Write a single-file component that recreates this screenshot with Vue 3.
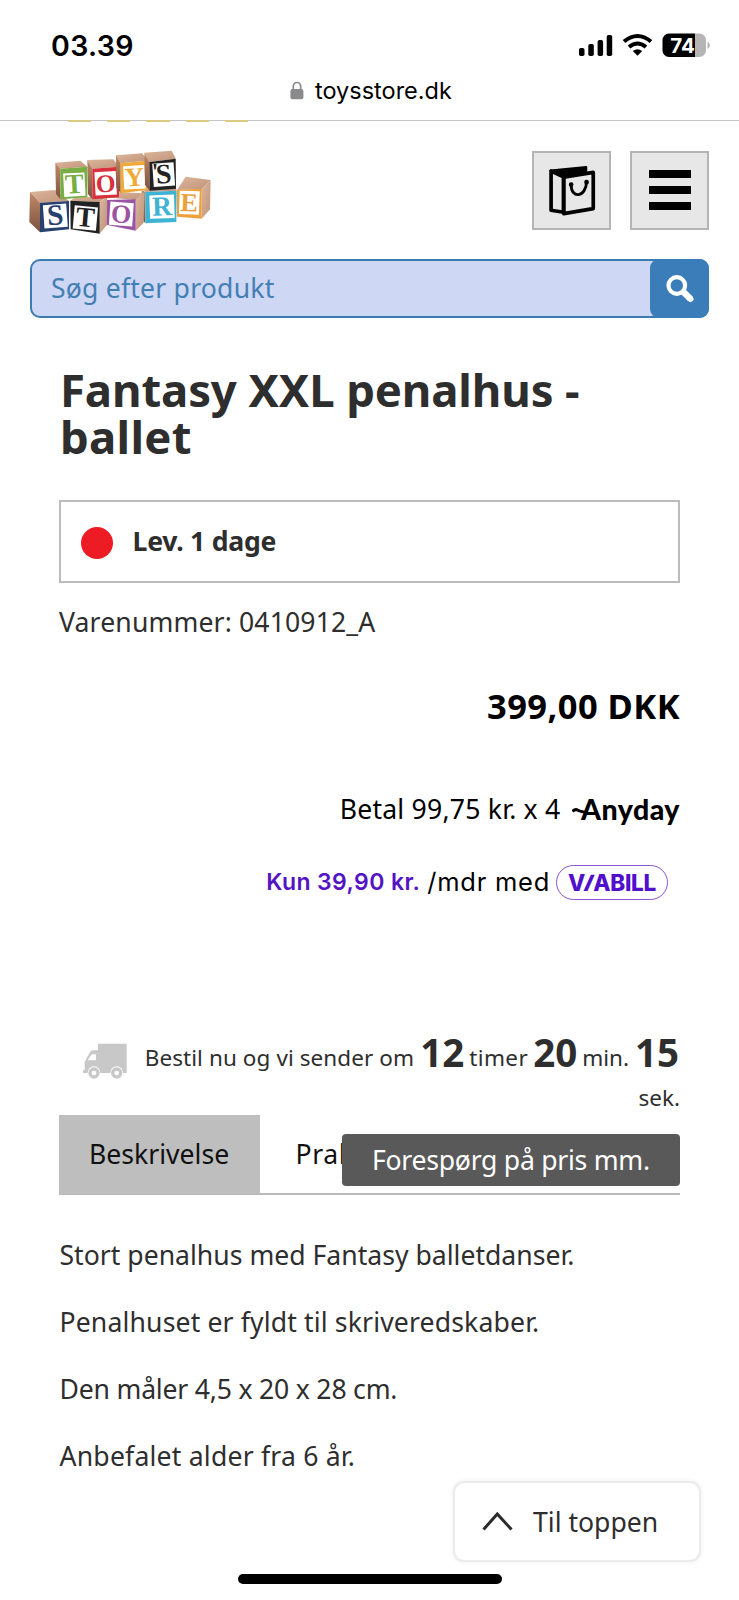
<script setup>
const paragraphs = [
  { text: 'Stort penalhus med Fantasy balletdanser.', cls: 'p1' },
  { text: 'Penalhuset er fyldt til skriveredskaber.', cls: 'p2' },
  { text: 'Den måler 4,5 x 20 x 28 cm.', cls: 'p3' },
  { text: 'Anbefalet alder fra 6 år.', cls: 'p4' }
]

const cubes = [
  { l: 'E', c: '#eda13b', front: '486,150 560,146 560,236 486,230', top: '486,150 512,110 587,120 560,148', side: '560,148 587,120 585,208 560,236', x: 523, y: 214, s: 78, r: 2, w: 60 },
  { l: 'R', c: '#3eb3d3', front: '391,156 485,152 484,246 391,250', top: '380,140 391,156 485,152 480,130', side: '380,150 391,156 391,250 380,236', x: 441, y: 226, s: 82, r: -2, w: 74 },
  { l: 'O', c: '#9a54a4', front: '274,180 362,178 362,272 274,254', top: '270,172 300,156 388,160 362,180', side: '362,178 388,156 386,248 362,272', x: 319, y: 248, s: 78, r: 4, w: 70 },
  { l: 'T', c: '#222222', front: '166,182 254,186 254,281 167,268', top: '166,182 180,172 276,170 254,186', side: '254,186 276,172 275,256 254,281', x: 211, y: 260, s: 84, r: 5, w: 70 },
  { l: 'S', c: '#26406f', front: '75,188 162,183 162,268 75,277', top: '45,156 120,150 162,183 75,188', side: '45,156 75,188 75,277 43,246', x: 121, y: 254, s: 88, r: -4, w: 70 },
  { l: 'T', c: '#77ad42', front: '136,86 217,80 217,172 136,178', top: '121,68 196,62 217,80 136,86', side: '121,68 136,86 136,178 123,162', x: 178, y: 160, s: 84, r: -3, w: 64 },
  { l: 'O', c: '#d8303c', front: '232,86 312,80 312,172 232,178', top: '217,60 295,58 312,80 232,86', side: '217,60 232,86 232,178 219,162', x: 272, y: 156, s: 76, r: -3, w: 64 },
  { l: 'Y', c: '#efaa38', front: '317,70 397,62 396,150 317,160', top: '303,46 382,40 397,62 317,70', side: '303,46 317,70 317,160 304,142', x: 358, y: 138, s: 80, r: -3, w: 64 },
  { l: 'S', c: '#222222', front: '403,66 482,56 483,146 404,152', top: '388,38 470,32 482,56 403,66', side: '388,38 403,66 404,152 390,134', x: 446, y: 130, s: 84, r: -4, w: 64 }
]
</script>

<template>
  <main class="page">
    <header class="chrome">
      <div class="status">
        <span class="time">03.39</span>
        <svg class="indicators" width="134" height="26" viewBox="0 0 134 26">
          <rect x="1" y="15" width="5.500" height="8" rx="1.800" />
          <rect x="10.300" y="11" width="5.500" height="12" rx="1.800" />
          <rect x="19.600" y="7" width="5.500" height="16" rx="1.800" />
          <rect x="28.700" y="2" width="5.500" height="21" rx="1.800" />
          <g fill="none" stroke="#000" stroke-width="4">
            <path d="M46 8.500Q59.500 -2.500 73 8.500" />
            <path d="M51 14Q59.500 7 68 14" />
          </g>
          <path d="M54.800 18Q59.500 14.500 64.200 18L59.500 22.700Z" />
          <path d="M91 .5h26v23.500H91a6.500 6.500 0 0 1-6.500-6.500V7A6.500 6.500 0 0 1 91 .5z" />
          <path d="M117 .5h4.500A6.500 6.500 0 0 1 128 7v10.500a6.500 6.500 0 0 1-6.500 6.500H117zM129.500 8.500q5 3.800 0 7.600z" fill="#b5b5b5" />
          <text x="92.300" y="20" class="charge">74</text>
        </svg>
      </div>
      <div class="address">
        <svg class="lock" width="14" height="19" viewBox="0 0 14 19">
          <path d="M3.300 9V5.500a3.700 4 0 0 1 7.400 0V9" fill="none" stroke="#8a8a8d" stroke-width="1.700" />
          <rect x=".4" y="8" width="13" height="10.300" rx="2" fill="#8a8a8d" />
        </svg>
        <span class="url">toysstore.dk</span>
      </div>
      <div class="dashes"><i v-for="n in 5" :key="n"></i></div>
    </header>

    <div class="masthead">
      <svg class="logo" width="215" height="110" viewBox="0 0 645 330">
        <defs>
          <linearGradient id="wood" x1="0" y1="0" x2="1" y2="1">
            <stop offset="0" stop-color="#dcb69b" /><stop offset="1" stop-color="#c0947a" />
          </linearGradient>
          <linearGradient id="woodside" x1="0" y1="0" x2="0" y2="1">
            <stop offset="0" stop-color="#c08a67" /><stop offset="1" stop-color="#7b5140" />
          </linearGradient>
        </defs>
        <g v-for="(b, i) in cubes" :key="i">
          <polygon :points="b.top" fill="url(#wood)" />
          <polygon :points="b.side" :fill="i === 0 || i === 2 || i === 3 ? 'url(#wood)' : 'url(#woodside)'" />
          <polygon :points="b.front" :fill="b.c" />
          <rect :x="b.x - b.w / 2" :y="b.y - 61" :width="b.w" height="70" fill="#fff" :transform="`rotate(${b.r} ${b.x} ${b.y - 26})`" />
          <text :x="b.x" :y="b.y" :font-size="b.s" :fill="b.c" text-anchor="middle" class="cube-letter" :transform="`rotate(${b.r} ${b.x} ${b.y - 26})`">{{ b.l }}</text>
        </g>
        <text x="420" y="116" font-size="70" fill="#222" text-anchor="middle" class="cube-letter">'</text>
      </svg>
      <div class="actions">
        <button class="square">
          <svg class="bag" width="79" height="79" viewBox="66 33 236 236" fill="none" stroke="#000" stroke-linejoin="round">
            <path d="M121 91 228 81V98L162 112Z" fill="#000" stroke-width="6" />
            <path d="M123 93V210L160 216V110Z" stroke-width="11" />
            <path d="M161 111 249 97V205L161 220Z" stroke-width="11" />
            <path d="M183 133C182 177 228 172 229 125" stroke-width="8.500" />
            <circle cx="183" cy="133" r="5" fill="#000" stroke-width="4" />
            <circle cx="229" cy="126" r="5" fill="#000" stroke-width="4" />
          </svg>
        </button>
        <button class="square burger"><i></i><i></i><i></i></button>
      </div>
    </div>

    <div class="search">
      <span class="ph">Søg efter produkt</span>
      <div class="go">
        <svg width="30" height="30" viewBox="0 0 30 30" fill="none" stroke="#fff">
          <circle cx="11.800" cy="11.500" r="8.300" stroke-width="4.200" />
          <path d="M17.500 17 25.500 25" stroke-width="6.500" />
          <path d="M24.800 24.300 25.500 25" stroke-width="6" stroke-linecap="round" />
        </svg>
      </div>
    </div>

    <section class="product">
      <h1><span class="t1">Fantasy XXL penalhus -</span><br><span class="t2">ballet</span></h1>
      <div class="stock"><i class="dot"></i><span class="lev">Lev. 1 dage</span></div>
      <div class="sku"><span class="vare">Varenummer: 0410912_A</span></div>
      <div class="price-row"><span class="price">399,00 DKK</span></div>
      <div class="anyday">
        <span class="betal">Betal 99,75 kr. x 4</span>
        <svg class="swash" width="16" height="8" viewBox="0 0 16 8"><path d="M.5 4.500Q3 1.500 6 3.200T15.500 5.500" fill="none" stroke="#000" stroke-width="3" /></svg>
        <span class="any">Anyday</span>
      </div>
      <div class="viabill">
        <span class="kun">Kun 39,90 kr.</span>
        <span class="mdr">/mdr med</span>
        <span class="pill"><span class="via">V<span class="slant">I</span>ABILL</span></span>
      </div>
      <div class="ship">
        <svg class="truck" width="44" height="37" viewBox="0 0 132 111" fill="#c8c8c8">
          <path fill-rule="evenodd" d="M45 2H131V90H0V82H5V56L22 26Q25 22 31 22H45ZM14 52H39V34H29Q26 34 24 37Z" />
          <circle cx="33" cy="89" r="19" fill="#fff" /><circle cx="33" cy="90" r="17" /><circle cx="33" cy="90" r="7" fill="#fff" />
          <circle cx="101" cy="89" r="19" fill="#fff" /><circle cx="101" cy="90" r="17" /><circle cx="101" cy="90" r="7" fill="#fff" />
        </svg>
        <div class="countdown">
          <span class="best">Bestil nu og vi sender om</span><b class="n12">12</b><span class="timer">timer</span><b class="n20">20</b><span class="min">min.</span><b class="n15">15</b>
        </div>
        <div class="countdown"><span class="sek">sek.</span></div>
      </div>
      <div class="tabs">
        <div class="tab active"><span class="tab1">Beskrivelse</span></div>
        <div class="tab"><span class="prak">Prak</span></div>
        <div class="ask"><span class="btn">Forespørg på pris mm.</span></div>
      </div>
      <div class="description">
        <p v-for="p in paragraphs" :key="p.cls"><span :class="p.cls">{{ p.text }}</span></p>
      </div>
    </section>

    <div class="totop">
      <svg width="31" height="19" viewBox="0 0 31 19" fill="none" stroke="#2b2b2b" stroke-width="3"><path d="M1.500 17.500 15.300 2 29.500 17.500" /></svg>
      <span class="top">Til toppen</span>
    </div>
    <div class="home"></div>
  </main>
</template>

<style>
body { margin: 0; background: #fff; }
</style>

<style scoped>
.page { position: relative; width: 739px; height: 1600px; overflow: hidden; background: #fff; color: #2e2e2e; font-family: "Noto Sans", sans-serif; font-size: 26.6px; white-space: nowrap; }
.page span, .page b { display: inline-block; }
.chrome { height: 121px; box-sizing: border-box; padding-top: 27px; border-bottom: 1px solid #c4c4c4; position: relative; font-family: Inter, sans-serif; color: #000; }
.status { display: flex; justify-content: space-between; align-items: center; height: 36px; padding: 0 27px 0 51px; }
.indicators { margin-top: 1px; }
.time { font-size: 28.500px; font-weight: 600; letter-spacing: .35px; }
.charge { font: 700 20.500px Inter, sans-serif; fill: #fff; }
.address { display: flex; align-items: center; height: 36px; margin-top: 9px; padding-left: 290px; gap: 11px; font-size: 23.500px; }
.dashes { position: absolute; left: 67.500px; top: 120px; display: flex; gap: 16px; }
.dashes i { width: 23.400px; height: 2px; background: #dccb82; }
.masthead { display: flex; justify-content: space-between; height: 138px; padding: 19px 30px 0 15px; box-sizing: border-box; }
.actions { display: flex; gap: 19px; padding-top: 11px; }
.square { width: 79px; height: 79px; box-sizing: border-box; border: 2px solid #b4b4b4; background: #e7e7e7; padding: 0; display: flex; align-items: center; justify-content: center; }
.bag { flex: none; }
.burger { flex-direction: column; gap: 7.500px; padding-bottom: 1px; }
.burger i { width: 42px; height: 8.300px; background: #000; }
.cube-letter { font-family: "Liberation Serif", serif; font-weight: 700; }
.search { margin: 0 30px; height: 59px; box-sizing: border-box; border: 2px solid #3c7bb0; border-radius: 10px; background: #ced7f4; display: flex; align-items: center; justify-content: space-between; padding-left: 19px; color: #447fb3; }
.ph { letter-spacing: .2px; padding-bottom: 2px; }
.go { width: 59px; height: 59px; margin-right: -2px; border-radius: 9px; background: #3a7db8; display: flex; align-items: center; justify-content: center; }
.product { padding: 0 59px; }
h1 { margin: 48px 0 0 1px; font-size: 45.500px; line-height: 47.300px; font-weight: 700; height: 94px; }
.t1 { letter-spacing: -.13px; }
.t2 { letter-spacing: .3px; }
.stock { margin-top: 40px; height: 83px; box-sizing: border-box; border: 2px solid #bcbcbc; display: flex; align-items: center; padding-left: 19.500px; gap: 20px; font-weight: 700; }
.lev { letter-spacing: -.23px; padding-bottom: 1px; }
.dot { width: 32px; height: 32px; border-radius: 50%; background: #ed1c24; margin-top: 2px; }
.sku { margin-top: 19px; height: 40px; line-height: 40px; }
.vare { letter-spacing: .13px; }
.price-row { margin-top: 44px; height: 40px; line-height: 40px; text-align: right; color: #000; font-weight: 700; font-size: 34.500px; }
.price { letter-spacing: .45px; }
.anyday { margin-top: 63px; height: 40px; line-height: 40px; display: flex; justify-content: flex-end; align-items: center; color: #000; }
.betal { letter-spacing: .22px; }
.swash { margin: 3px -7.500px 0 12px; }
.any { font-family: Lato, sans-serif; font-weight: 900; font-size: 28.500px; letter-spacing: .5px; }
.viabill { margin-top: 35px; height: 36px; display: flex; justify-content: flex-end; align-items: center; padding-right: 12px; font-family: Inter, sans-serif; font-size: 23px; color: #000; }
.kun { color: #5414c4; font-weight: 600; margin-right: 7px; letter-spacing: .4px; padding-bottom: 1px; }
.mdr { font-size: 25.500px; letter-spacing: .75px; padding-bottom: 2px; }
.pill { border: 1.500px solid #8a55cf; border-radius: 18px; width: 110px; height: 33px; line-height: 33px; margin-left: 6px; text-align: center; color: #5010cc; font-weight: 800; font-size: 22.500px; }
.via { letter-spacing: -.3px; }
.slant { transform: skewX(-24deg); margin: 0 1px; }
.ship { margin-top: 138px; height: 77px; position: relative; text-align: right; font-size: 22.500px; line-height: 40px; }
.countdown { height: 40px; }
.countdown b { font-size: 38.500px; line-height: 0; vertical-align: -1px; }
.best { letter-spacing: .08px; }
.n12, .n15 { margin-left: 6px; }
.n20 { margin-left: 5px; }
.n15 { margin-right: 1px; }
.timer, .min { margin-left: 5px; }
.timer { letter-spacing: .4px; }
.truck { position: absolute; left: 24px; top: 5px; }
.tabs { display: flex; height: 80px; box-sizing: border-box; border-bottom: 2px solid #b9b9b9; position: relative; line-height: 78px; color: #111; }
.tab { padding: 0 35.500px; height: 79px; }
.prak { letter-spacing: .6px; }
.active { background: #bebebe; width: 201px; padding: 0 0 0 30px; box-sizing: border-box; }
.ask { position: absolute; left: 283px; top: 19px; width: 338px; height: 52px; line-height: 52px; box-sizing: border-box; padding-left: 30px; background: #595959; color: #fff; border-radius: 4px; }
.btn { letter-spacing: -.27px; }
.description { padding: 26.500px 0 0 .5px; }
.p2 { letter-spacing: .14px; }
.p3 { letter-spacing: -.2px; }
.p4 { letter-spacing: .2px; }
p { margin: 0; height: 67px; line-height: 67px; }
.totop { position: absolute; left: 453px; top: 1481px; width: 248px; height: 81px; box-sizing: border-box; border: 2px solid #ebebeb; border-radius: 11px; background: #fff; display: flex; align-items: center; padding-left: 27px; gap: 20px; box-shadow: 0 0 4px #eee; }
.home { position: absolute; left: 238px; top: 1574px; width: 264px; height: 10px; border-radius: 5px; background: #000; }
</style>
